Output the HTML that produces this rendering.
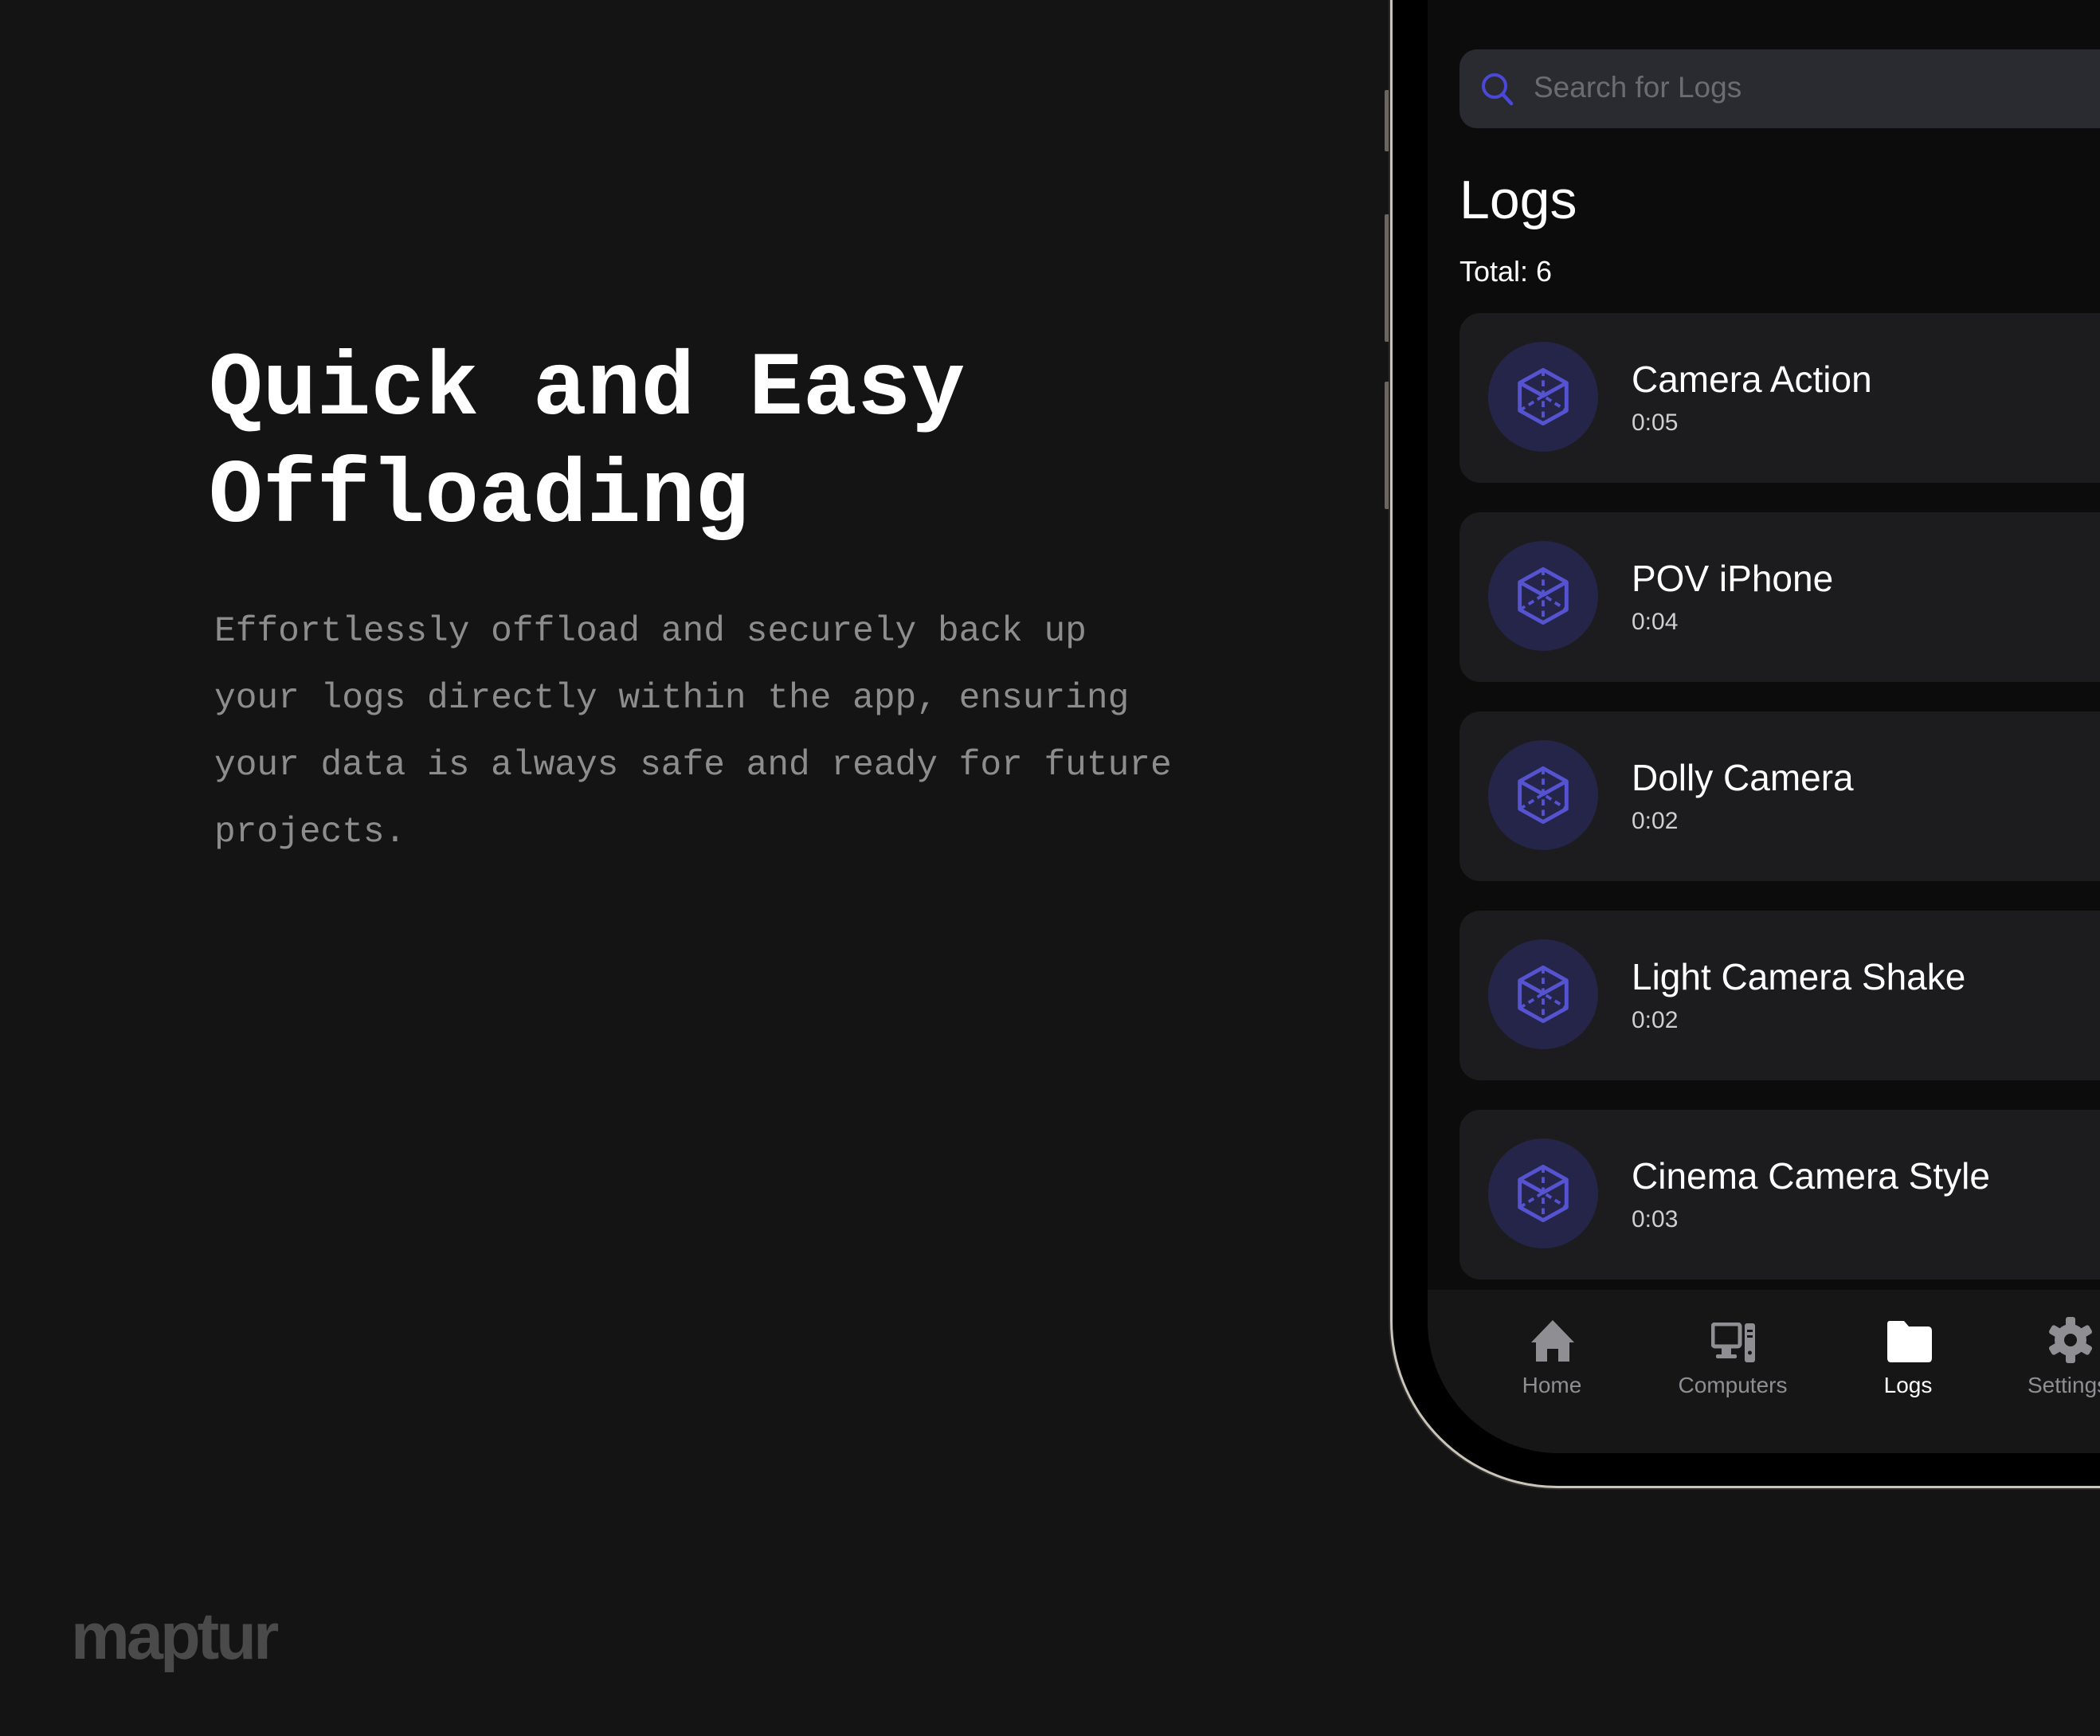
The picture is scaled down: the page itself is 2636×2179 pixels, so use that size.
<!DOCTYPE html>
<html><head><meta charset="utf-8"><style>
*{margin:0;padding:0;box-sizing:border-box}
body{width:2636px;height:2179px;background:#141414;position:relative;overflow:hidden;font-family:"Liberation Sans",sans-serif}
.abs{position:absolute}
h1{position:absolute;left:262px;top:422px;font-family:"Liberation Mono",monospace;font-weight:bold;font-size:113px;line-height:135px;color:#fff;white-space:nowrap}
p.d{position:absolute;left:269px;top:751px;width:1600px;white-space:nowrap;font-family:"Liberation Mono",monospace;font-size:44.5px;line-height:84px;color:#8d8d8d}
.logo{left:89px;top:2006px;font-size:83px;font-weight:bold;color:#4a4a4a;letter-spacing:-4px}
.frame{left:1745px;top:-300px;width:1200px;height:2168px;border:3px solid #cbc4b8;border-radius:210px;background:#000;box-shadow:0 0 0 2px #2a2a2a}
.btn{left:1738px;width:6px;background:#6a665f;border-radius:2px}
.screen{left:1792px;top:-300px;width:1200px;height:2124px;border-radius:165px;background:#0c0c0c;overflow:hidden}
.search{left:1832px;top:62px;width:900px;height:99px;border-radius:22px;background:#2a2b30}
.search span{position:absolute;left:93px;top:27px;font-size:37px;color:#6b6c72}
.t1{left:1832px;top:212px;font-size:68px;color:#fff}
.t2{left:1832px;top:320px;font-size:36px;color:#fff}
.card{left:1832px;width:900px;height:213px;border-radius:26px;background:#1c1c1f}
.card .c{position:absolute;left:36px;top:36px;width:138px;height:138px;border-radius:50%;background:#25254a}
.card .c svg{position:absolute;left:31px;top:31px}
.card .n{position:absolute;left:216px;top:56px;font-size:46px;color:#fff}
.card .s{position:absolute;left:216px;top:121px;font-size:30px;color:#cfcfd2}
.nav{left:1792px;top:1619px;width:1000px;height:205px;background:#161616}
.lab{font-size:28px;color:#8e8e93;text-align:center;width:200px;top:1723px}
</style></head><body>
<h1>Quick and Easy<br>Offloading</h1>
<p class="d">Effortlessly offload and securely back up<br>your logs directly within the app, ensuring<br>your data is always safe and ready for future<br>projects.</p>
<div class="abs logo">maptur</div>

<div class="abs btn" style="top:113px;height:77px"></div>
<div class="abs btn" style="top:269px;height:160px"></div>
<div class="abs btn" style="top:479px;height:160px"></div>
<div class="abs frame"></div>
<div class="abs screen"></div>

<div class="abs search">
<svg class="abs" style="left:25px;top:27px" width="46" height="46" viewBox="0 0 46 46"><circle cx="19" cy="19" r="14" fill="none" stroke="#4a48d8" stroke-width="4"/><line x1="29" y1="29" x2="40" y2="41" stroke="#4a48d8" stroke-width="4.5" stroke-linecap="round"/></svg>
<span>Search for Logs</span></div>
<div class="abs t1">Logs</div>
<div class="abs t2">Total: 6</div>

<div class="abs card" style="top:393px"><div class="c"><svg width="76" height="76" viewBox="0 0 70 70"><path d="M35 4 L62 19 L62 51 L35 66 L8 51 L8 19 Z M8 19 L35 34 L62 19" fill="none" stroke="#5553d0" stroke-width="4.5" stroke-linejoin="round"/><path d="M35 4 V66 M8 51 L35 34 L62 51" fill="none" stroke="#5553d0" stroke-width="3.5" stroke-dasharray="7 5"/></svg></div><div class="n">Camera Action</div><div class="s">0:05</div></div>
<div class="abs card" style="top:643px"><div class="c"><svg width="76" height="76" viewBox="0 0 70 70"><path d="M35 4 L62 19 L62 51 L35 66 L8 51 L8 19 Z M8 19 L35 34 L62 19" fill="none" stroke="#5553d0" stroke-width="4.5" stroke-linejoin="round"/><path d="M35 4 V66 M8 51 L35 34 L62 51" fill="none" stroke="#5553d0" stroke-width="3.5" stroke-dasharray="7 5"/></svg></div><div class="n">POV iPhone</div><div class="s">0:04</div></div>
<div class="abs card" style="top:893px"><div class="c"><svg width="76" height="76" viewBox="0 0 70 70"><path d="M35 4 L62 19 L62 51 L35 66 L8 51 L8 19 Z M8 19 L35 34 L62 19" fill="none" stroke="#5553d0" stroke-width="4.5" stroke-linejoin="round"/><path d="M35 4 V66 M8 51 L35 34 L62 51" fill="none" stroke="#5553d0" stroke-width="3.5" stroke-dasharray="7 5"/></svg></div><div class="n">Dolly Camera</div><div class="s">0:02</div></div>
<div class="abs card" style="top:1143px"><div class="c"><svg width="76" height="76" viewBox="0 0 70 70"><path d="M35 4 L62 19 L62 51 L35 66 L8 51 L8 19 Z M8 19 L35 34 L62 19" fill="none" stroke="#5553d0" stroke-width="4.5" stroke-linejoin="round"/><path d="M35 4 V66 M8 51 L35 34 L62 51" fill="none" stroke="#5553d0" stroke-width="3.5" stroke-dasharray="7 5"/></svg></div><div class="n">Light Camera Shake</div><div class="s">0:02</div></div>
<div class="abs card" style="top:1393px"><div class="c"><svg width="76" height="76" viewBox="0 0 70 70"><path d="M35 4 L62 19 L62 51 L35 66 L8 51 L8 19 Z M8 19 L35 34 L62 19" fill="none" stroke="#5553d0" stroke-width="4.5" stroke-linejoin="round"/><path d="M35 4 V66 M8 51 L35 34 L62 51" fill="none" stroke="#5553d0" stroke-width="3.5" stroke-dasharray="7 5"/></svg></div><div class="n">Cinema Camera Style</div><div class="s">0:03</div></div>

<div class="abs nav" style="border-bottom-left-radius:165px"></div>
<svg class="abs" style="left:1920px;top:1655px" width="58" height="56" viewBox="0 0 58 56"><path d="M29 2 L56 30 L50 30 L50 54 L36 54 L36 38 L22 38 L22 54 L8 54 L8 30 L2 30 Z" fill="#8e8e93"/></svg>
<svg class="abs" style="left:2148px;top:1660px" width="56" height="50" viewBox="0 0 56 50"><rect x="2" y="2" width="34" height="28" rx="3" fill="none" stroke="#8e8e93" stroke-width="5"/><rect x="13" y="32" width="12" height="8" fill="#8e8e93"/><rect x="6" y="40" width="26" height="5" rx="2" fill="#8e8e93"/><rect x="42" y="1" width="13" height="49" rx="3" fill="#8e8e93"/><circle cx="48.5" cy="38" r="2.5" fill="#161616"/><rect x="45" y="9" width="7" height="3" fill="#161616"/><rect x="45" y="16" width="7" height="3" fill="#161616"/></svg>
<svg class="abs" style="left:2368px;top:1657px" width="58" height="54" viewBox="0 0 58 54"><path d="M4 1 H22 L28 8 H52 Q57 8 57 14 V48 Q57 53 52 53 H6 Q1 53 1 48 V5 Q1 1 4 1 Z" fill="#fff"/></svg>
<svg class="abs" style="left:2570px;top:1652px" width="58" height="60" viewBox="0 0 58 60"><g fill="#8e8e93" transform="translate(29 30)"><circle r="20"/><rect x="-6" y="-29" width="12" height="58" rx="3"/><rect x="-6" y="-29" width="12" height="58" rx="3" transform="rotate(60)"/><rect x="-6" y="-29" width="12" height="58" rx="3" transform="rotate(120)"/></g><circle cx="29" cy="30" r="8" fill="#161616"/></svg>
<div class="abs lab" style="left:1848px">Home</div>
<div class="abs lab" style="left:2075px">Computers</div>
<div class="abs lab" style="left:2295px;color:#fff">Logs</div>
<div class="abs lab" style="left:2545px;text-align:left;width:100px">Settings</div>
</body></html>
